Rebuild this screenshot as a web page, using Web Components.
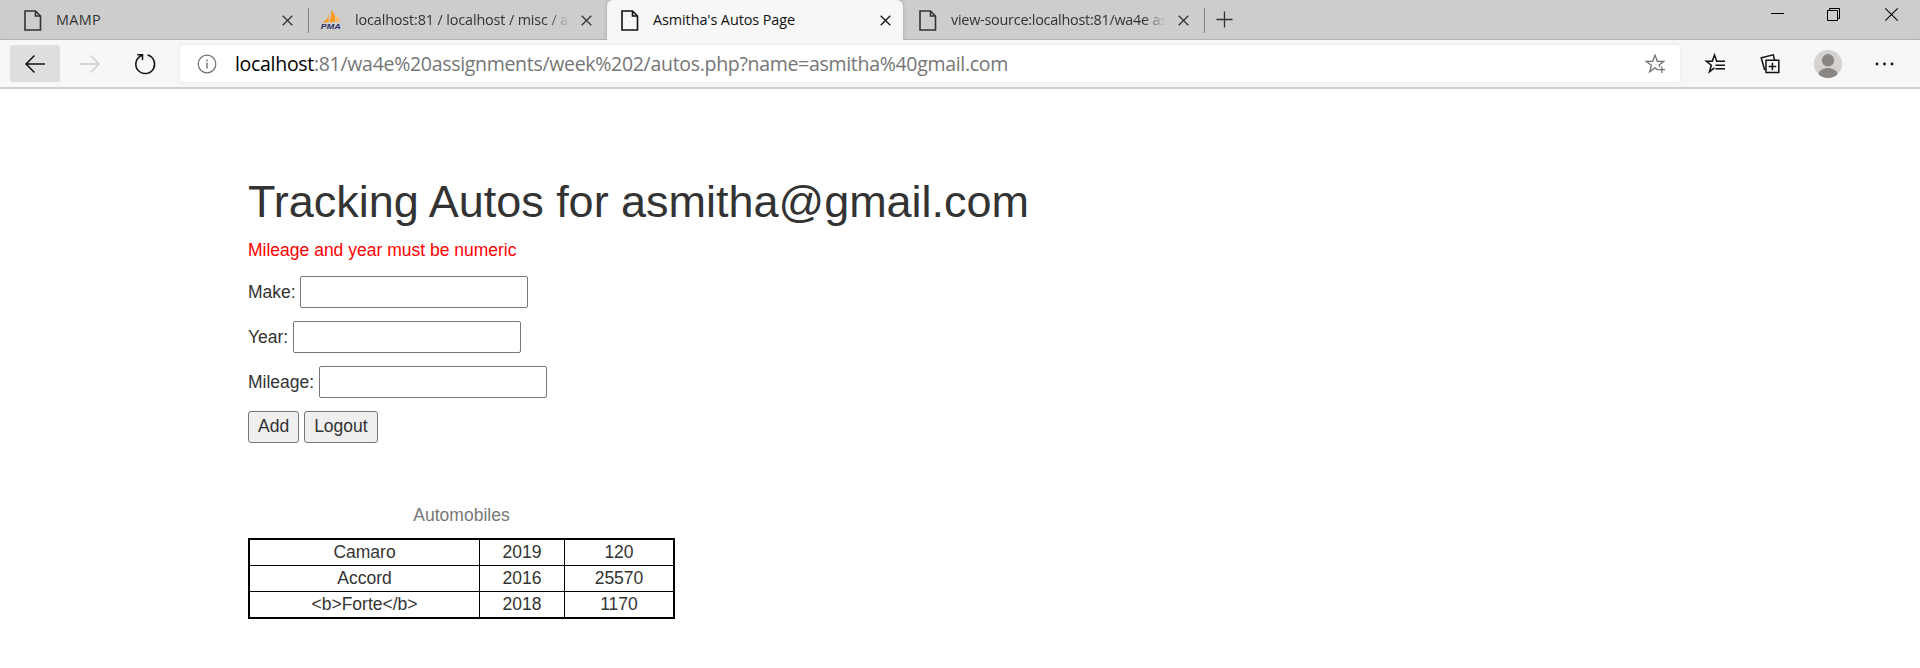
<!DOCTYPE html>
<html lang="en"><head><meta charset="utf-8"><title>Asmitha's Autos Page</title>
<style>html,body{margin:0;height:100%;background:#fff;overflow:hidden}</style></head>
<body><browser-window></browser-window>
<script>
const define = (name, markup, setup) => customElements.define(name, class extends HTMLElement {
  connectedCallback() {
    if (this.shadowRoot) return;
    const t = document.createElement('template');
    t.innerHTML = typeof markup === 'function' ? markup(this) : markup;
    this.attachShadow({mode:'open'}).append(t.content.cloneNode(true));
    if (setup) setup(this);
  }
});

const icons = {
  page:[18,21,'<path d="M1 1h10.5l5 5V20H1z M11.5 1v5h5" stroke-width="1.6"/>'],
  close:[11,11,'<path d="M.7.7l9.6 9.6M10.3.7L.7 10.3" stroke-width="1.3"/>'],
  plus:[17,17,'<path d="M8.5.5v16M.5 8.5h16" stroke-width="1.3"/>'],
  back:[20,18,'<path d="M20 9H1M9.5.5L1 9l8.5 8.5" stroke-width="1.5"/>'],
  forward:[20,18,'<path d="M0 9h19M10.500.5L19 9l-8.5 8.5" stroke-width="1.4"/>'],
  reload:[22,22,'<path d="M13.6 2.1A9.400 9.400 0 1 1 5.3 3.900M3.300 1.700h5.200v5.200M8.300 1.900L5.100 4.200" stroke-width="1.5"/>'],
  info:[20,20,'<circle cx="10" cy="10" r="8.800" stroke-width="1.2"/><path d="M10 8.500v6M10 5.500v1.700" stroke-width="1.400"/>'],
  staradd:[21,20,'<path d="M13.200 16.300L10 13.800l-5.400 4 1.800-6.500L1.200 7.300h6.500L10 1l2.300 6.300h6.500l-4.600 3.700.5 2M16.800 12.500v6.500M13.500 15.700h6.500" stroke-width="1.25"/>'],
  favorites:[21,20,'<path d="M9.500 13.800l-5 4 1.800-6.600L1.300 7.300h6L9.500 1l2.200 6.300H20M10.500 11.300H20M10.500 14.800H20" stroke-width="1.5"/>'],
  collections:[20,20,'<path d="M6 6.200h12.800v12.300H6zM12.400 8.700v7.600M8.600 12.500h7.600M4.700 16L1.200 3.800 13.300.8l1.300 5.200" stroke-width="1.5"/>'],
  avatar:[28,28,'<circle cx="14" cy="14" r="14" fill="#d4d3d1" stroke="none"/><path d="M4.300 24.100C5.500 20.400 9 18 14 18s8.500 2.400 9.700 6.100A14 14 0 0 1 4.300 24.100z" fill="#8a8684" stroke="none"/><circle cx="14" cy="10.300" r="6.200" fill="#8a8684" stroke="none"/>'],
  more:[19,4,'<g fill="currentColor" stroke="none"><circle cx="2" cy="2" r="1.400"/><circle cx="9.500" cy="2" r="1.400"/><circle cx="17" cy="2" r="1.400"/></g>'],
  minimize:[13,13,'<path d="M0 5.500h13"/>'],
  restore:[13,13,'<path d="M.5 2.500h10v10H.5zM2.500 2V.5h10v10H11"/>'],
  winclose:[13,13,'<path d="M.3.3l12.400 12.400M12.700.3L.3 12.700" stroke-width="1.100"/>'],
  pma:[20,20,'<g stroke="none" fill="#f89c20"><path d="M8.200 1.500C8 6.500 5.500 10.500 1 12.800L7.600 12z"/><path d="M10 0c4.500 4 4.500 8.500 4 12l-5.700.2C10 8 10.500 4 10 0z"/><path d="M14.500 4.500c2.500 2 4 5 4.500 8l-4-.6z" fill="#fbbd6a"/></g><text x="-.2" y="19.300" textLength="20" lengthAdjust="spacingAndGlyphs" font-family="Liberation Sans,sans-serif" font-size="7.500" font-weight="700" font-style="italic" fill="#302d63" stroke="none">PMA</text>']
};
define('ui-icon', el => {
  const [w,h,body] = icons[el.getAttribute('name')];
  return `<style>:host{display:block;flex:none;width:${w}px;height:${h}px}svg{display:block;overflow:visible}</style><svg width="${w}" height="${h}" viewBox="0 0 ${w} ${h}" fill="none" stroke="currentColor">${body}</svg>`;
});

// Spreads its text over a given measure by adjusting the tracking.
define('text-run', '<style>:host{display:inline-block;white-space:nowrap}span{display:inline-block}</style><span><slot></slot></span>', el => {
  const target = +el.getAttribute('measure'), span = el.shadowRoot.querySelector('span');
  if (target) span.style.letterSpacing = (target - span.getBoundingClientRect().width) / el.textContent.length + 'px';
});

define('browser-tab', el => `<style>
:host{display:flex;box-sizing:border-box;height:40px;align-items:center;position:relative;color:#333;font:14.400px/20px "Open Sans","Noto Sans",sans-serif;flex:none;padding-left:16px}
:host([active]){background:#f7f7f7;color:#111;border-radius:6px 6px 0 0;box-shadow:0 0 4px #0003;clip-path:inset(0 -5px 0 -5px)}
.t{flex:1;overflow:hidden;white-space:nowrap;margin-left:14px;padding-bottom:1px}
:host([fade]) .t{-webkit-mask:linear-gradient(90deg,#000 calc(100% - 22px),transparent)}
ui-icon.x{margin-right:15px;margin-left:12px}
:host([active]) ui-icon.x{margin-right:12px}
.bar{width:1px;height:25px;background:#858585}
</style><ui-icon name="${el.getAttribute('icon')}"></ui-icon><div class="t"><slot></slot></div><ui-icon class="x" name="close"></ui-icon>${el.hasAttribute('bar')?'<div class="bar"></div>':''}`);

define('tab-strip', `<style>
:host{display:flex;height:40px;background:#cdcdcd;box-shadow:inset 0 -1px 1px #0002;color:#333}
.a{width:301px;padding-left:16px;margin-left:8px}.b{width:298px;padding-left:12px}.c{width:296px;padding-left:14px}.d{width:302px}
ui-icon.new{margin:11px 0 0 11px}
.win{margin-left:auto;display:flex;gap:44px;padding:8px 22px 0 0;color:#000}.win ui-icon:nth-child(2){margin-right:1px}.win ui-icon:first-child{margin-right:-1px}
</style>
<browser-tab class="a" icon="page" bar><text-run measure="45">MAMP</text-run></browser-tab>
<browser-tab class="b" icon="pma" fade><text-run measure="242">localhost:81 / localhost / misc / autos</text-run></browser-tab>
<browser-tab class="c" icon="page" active><text-run measure="142">Asmitha's Autos Page</text-run></browser-tab>
<browser-tab class="d" icon="page" bar fade><text-run measure="283">view-source:localhost:81/wa4e assignments</text-run></browser-tab>
<ui-icon class="new" name="plus"></ui-icon>
<div class="win"><ui-icon name="minimize"></ui-icon><ui-icon name="restore"></ui-icon><ui-icon name="winclose"></ui-icon></div>`);

define('address-bar', `<style>
:host{display:flex;align-items:center;box-sizing:border-box;width:1500px;height:37px;margin-left:24px;padding:0 14px 0 17px;background:#fff;border-radius:4px;box-shadow:0 0 5px #0001;font:19.500px/28px "Open Sans","Noto Sans",sans-serif;color:#767676}
b{font-weight:400;color:#000}.url{flex:1;margin-left:18px}ui-icon{color:#707070}
</style><ui-icon name="info"></ui-icon><div class="url"><text-run measure="773"><b>localhost</b>:81/wa4e%20assignments/week%202/autos.php?name=asmitha%40gmail.com</text-run></div><ui-icon name="staradd"></ui-icon>`);

define('tool-bar', `<style>
:host{display:flex;box-sizing:border-box;height:49px;align-items:center;padding:0 26px 0 10px;background:#f7f7f7;border-bottom:2px solid #cecece;color:#111}
.back{width:50px;height:37px;border-radius:3px;background:#dedede;display:grid;place-items:center}
.fwd{color:#ccc;margin-left:20px}.re{margin-left:34px}
.tools{margin-left:auto;display:flex;align-items:center}
.tools :nth-child(2){margin-left:34px}.tools :nth-child(3){margin-left:34px}.tools :nth-child(4){margin-left:33px}
</style><div class="back"><ui-icon name="back"></ui-icon></div><ui-icon class="fwd" name="forward"></ui-icon><ui-icon class="re" name="reload"></ui-icon><address-bar></address-bar>
<div class="tools"><ui-icon name="favorites"></ui-icon><ui-icon name="collections"></ui-icon><ui-icon name="avatar"></ui-icon><ui-icon name="more"></ui-icon></div>`);

define('form-row', el => `<style>
:host{display:flex;height:32px;align-items:center;margin-bottom:13px}
label{padding-top:1.500px}
input{box-sizing:border-box;width:228px;height:32px;margin:0 0 0 4.800px;border:1px solid #767676;border-radius:2px;padding:1px 2px;font:inherit;background:#fff}
</style><label><text-run measure="${el.getAttribute('measure')}"><slot></slot></text-run></label><input type="text">`);

define('form-button', `<style>:host{display:block}
button{box-sizing:border-box;height:32px;margin:0;padding:0 9px 1px;border:1px solid #767676;border-radius:3px;background:#efefef;font:inherit;color:#333;display:block}
</style><button><slot></slot></button>`);

define('auto-table', `<style>
:host{display:block;width:427px;margin-top:60px}
.cap{text-align:center;color:#777;line-height:25px;padding-bottom:10px}
.grid{display:grid;grid-template-columns:229px 84px 108px;grid-auto-rows:25px;gap:1px;background:#000;border:2px solid #000}
.grid div{background:#fff;text-align:center;line-height:25px}
</style><div class="cap">Automobiles</div><div class="grid">
<div>Camaro</div><div>2019</div><div>120</div><div>Accord</div><div>2016</div><div>25570</div><div>&lt;b&gt;Forte&lt;/b&gt;</div><div>2018</div><div>1170</div></div>`);

define('autos-page', `<style>
:host{display:block;padding:87.5px 0 0 248px;font:17.500px/25px "Liberation Sans",Arial,sans-serif;color:#333}
h1{font-size:45px;line-height:49.500px;font-weight:500;margin:0 0 11.500px}
p{margin:0 0 13px;color:red}.buttons{display:flex;gap:5px}
</style><h1><text-run measure="781">Tracking Autos for asmitha@gmail.com</text-run></h1><p><text-run measure="268.500">Mileage and year must be numeric</text-run></p>
<form-row measure="47.500">Make:</form-row><form-row measure="40">Year:</form-row><form-row measure="66">Mileage:</form-row>
<div class="buttons"><form-button>Add</form-button><form-button>Logout</form-button></div>
<auto-table></auto-table>`);

define('browser-window', `<style>:host{display:block;height:668px;overflow:hidden;background:#fff}</style><tab-strip></tab-strip><tool-bar></tool-bar><autos-page></autos-page>`);
</script></body></html>
